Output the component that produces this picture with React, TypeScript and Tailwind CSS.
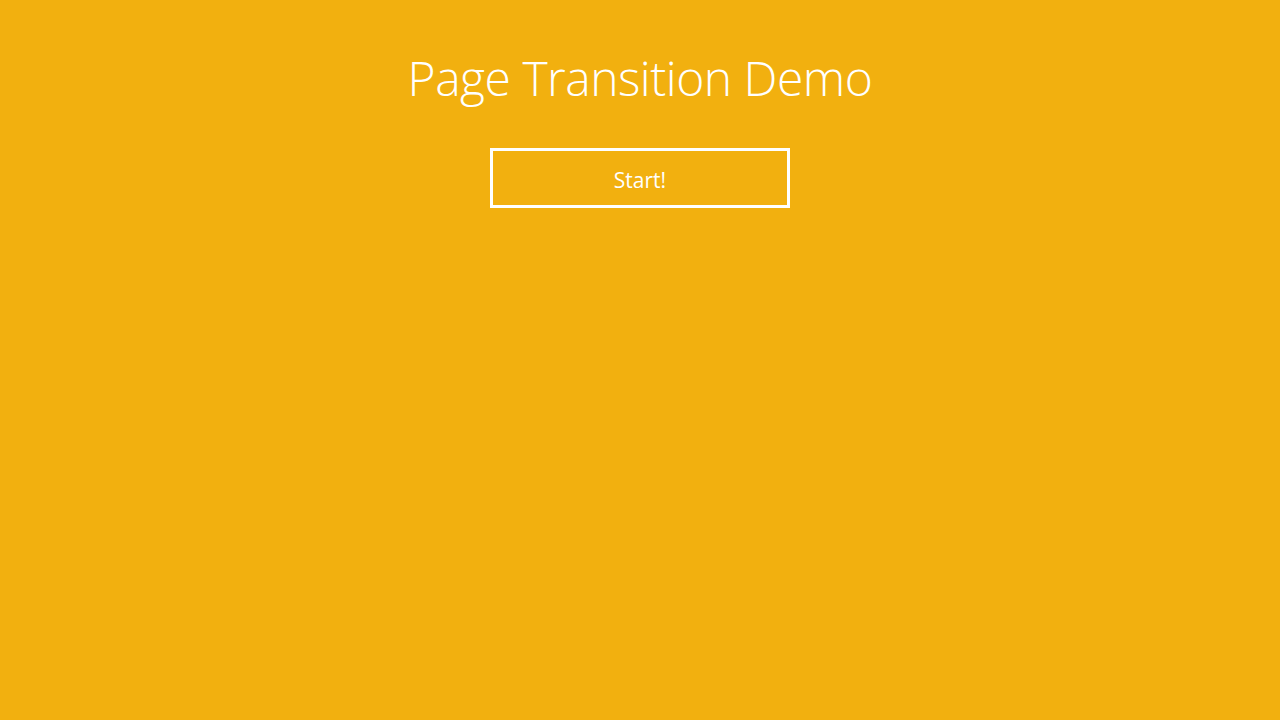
export default function App() {
  return (
    <div
      className="flex h-screen w-full flex-col items-center bg-[#f2b00f] text-white"
      style={{ fontFamily: '"Open Sans", "Noto Sans", sans-serif' }}
    >
      <h1 className="mt-[42px] text-[48px] font-light leading-[72px] tracking-[-0.5px]">
        Page Transition Demo
      </h1>
      <button className="mt-[34px] flex h-[60px] w-[300px] items-center justify-center border-[3px] border-white pt-[5px] text-[21px] font-normal">
        Start!
      </button>
    </div>
  );
}
